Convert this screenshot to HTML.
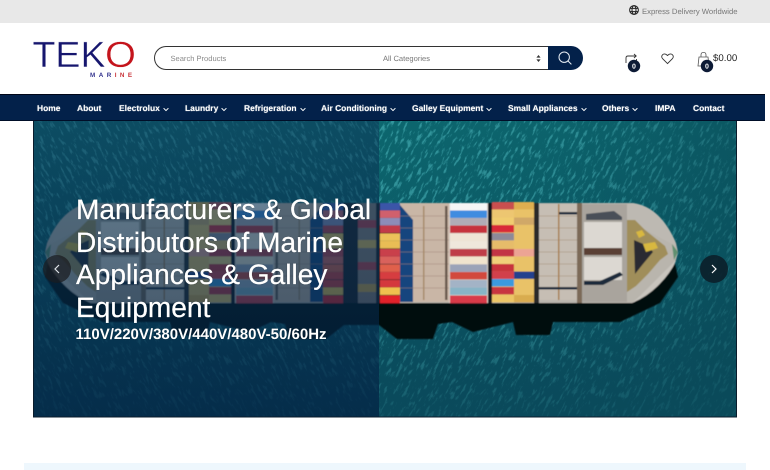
<!DOCTYPE html>
<html lang="en"><head><meta charset="utf-8"><title>Teko Marine</title>
<style>
html,body{margin:0;padding:0;background:#fff;width:770px;height:470px;overflow:hidden}
body{position:relative;font-family:"Liberation Sans",Arial,sans-serif;text-rendering:geometricPrecision}
.a{position:absolute;white-space:nowrap}
.nav{position:absolute;left:0;top:94px;width:765px;height:27px;background:#03214a;box-shadow:inset 0 1px 0 #000618,inset 0 -1px 0 #000e28}
.nav span{position:absolute;top:9px;font-size:8.45px;line-height:10px;font-weight:700;color:#fff;white-space:nowrap;text-shadow:0 0 1px rgba(255,255,255,.6)}
.nav svg{display:inline-block;margin-left:3px;vertical-align:-1px}
.t{font-size:28.1px;line-height:32.7px;color:#fff;left:76px;text-shadow:0 0 1px rgba(0,0,0,.5);-webkit-text-stroke:.25px #fff}
</style></head><body>
<div class="a" style="left:0;top:0;width:770px;height:23px;background:#e8e8e8"></div>
<svg class="a" style="left:629px;top:5px" width="10" height="10" viewBox="0 0 10 10" fill="none" stroke="#222" stroke-width="1"><circle cx="5" cy="5" r="4.4"/><ellipse cx="5" cy="5" rx="2" ry="4.4"/><path d="M.8 3.4h8.4M.8 6.600h8.400"/></svg>
<div class="a" style="left:642px;top:6px;font-size:7.7px;line-height:11px;color:#777">Express Delivery Worldwide</div>

<svg class="a" style="left:30px;top:36px" width="110" height="44" viewBox="0 0 110 44"><text x="2.5" y="31" font-family="Liberation Sans" font-size="36.5" fill="#16166e" stroke="#fff" stroke-width=".4" textLength="73" lengthAdjust="spacingAndGlyphs">TEK</text><text x="75" y="31" font-family="Liberation Sans" font-size="36.5" fill="#c4141c" stroke="#fff" stroke-width=".4" textLength="31" lengthAdjust="spacingAndGlyphs">O</text><text x="60" y="41" font-family="Liberation Sans" font-weight="700" font-size="6.3" letter-spacing="3.45" fill="#3a3a92">MAR<tspan fill="#c9343a">INE</tspan></text></svg>

<div class="a" style="left:154px;top:46px;width:394px;height:24px;box-sizing:border-box;border:1px solid #333;border-right:0;border-radius:12px 0 0 12px;background:#fff"></div>
<div class="a" style="left:548px;top:46px;width:35px;height:24px;background:#03214a;border-radius:0 12px 12px 0"></div>
<svg class="a" style="left:558px;top:51px" width="14" height="14" viewBox="0 0 14 14" fill="none" stroke="#e8eef4" stroke-width="1"><circle cx="6.2" cy="6.2" r="5.2"/><path d="M10 10l3.4 3.4"/></svg>
<div class="a" style="left:170.5px;top:53.5px;font-size:7.55px;line-height:10px;color:#8a8a8a">Search Products</div>
<div class="a" style="left:383px;top:53.5px;font-size:7.55px;line-height:10px;color:#777">All Categories</div>
<svg class="a" style="left:536px;top:55px" width="5" height="7" viewBox="0 0 5 7" fill="#333"><path d="M2.5 0L4.6 2.6H.4zM2.5 7L.4 4.4h4.2z"/></svg>

<svg class="a" style="left:620px;top:46px" width="124" height="30" viewBox="620 46 124 30" fill="none" stroke="#333" stroke-width=".9">
<path d="M626 63v-5q0-2 2-2h8M634 54l2.2 2-2.2 2M636.5 59v4"/>
<circle cx="634" cy="66" r="6.2" fill="#0c1a35" stroke="none"/>
<path d="M667.5 63.6l-5-5q-1.600-2 0-3.800q2.200-2 5 .7q2.800-2.700 5-.7q1.600 1.800 0 3.800z"/>
<path d="M699 57h9l1 9h-11zM701 57v-2q0-2.600 2.500-2.600t2.500 2.600v2" stroke="#555" stroke-width=".8"/>
<circle cx="707" cy="66" r="6.200" fill="#0c1a35" stroke="none"/>
<g font-family="Liberation Sans" font-weight="700" font-size="7" fill="#fff" stroke="none" text-anchor="middle"><text x="634" y="68.500">0</text><text x="707" y="68.500">0</text></g>
</svg>
<div class="a" style="left:713px;top:52.5px;font-size:9.7px;line-height:12px;color:#222">$0.00</div>

<div class="nav">
<span style="left:37px">Home</span>
<span style="left:77px">About</span>
<span style="left:119px">Electrolux<svg width="6" height="5" viewBox="0 0 6 5" fill="none" stroke="#fff"><path d="M.6 1.200L3 3.600l2.400-2.400"/></svg></span>
<span style="left:185px">Laundry<svg width="6" height="5" viewBox="0 0 6 5" fill="none" stroke="#fff"><path d="M.6 1.200L3 3.600l2.400-2.400"/></svg></span>
<span style="left:244px">Refrigeration<svg width="6" height="5" viewBox="0 0 6 5" fill="none" stroke="#fff"><path d="M.6 1.200L3 3.600l2.400-2.400"/></svg></span>
<span style="left:321px">Air Conditioning<svg width="6" height="5" viewBox="0 0 6 5" fill="none" stroke="#fff"><path d="M.6 1.200L3 3.600l2.400-2.400"/></svg></span>
<span style="left:412px">Galley Equipment<svg width="6" height="5" viewBox="0 0 6 5" fill="none" stroke="#fff"><path d="M.6 1.200L3 3.600l2.400-2.400"/></svg></span>
<span style="left:508px">Small Appliances<svg width="6" height="5" viewBox="0 0 6 5" fill="none" stroke="#fff"><path d="M.6 1.200L3 3.600l2.400-2.400"/></svg></span>
<span style="left:602px">Others<svg width="6" height="5" viewBox="0 0 6 5" fill="none" stroke="#fff"><path d="M.6 1.200L3 3.600l2.400-2.400"/></svg></span>
<span style="left:655px">IMPA</span>
<span style="left:693px">Contact</span>
</div>

<svg class="a" style="left:33px;top:121px" width="704" height="297" viewBox="33 121 704 297">
<defs>
<clipPath id="cl"><rect x="34" y="121" width="345" height="296"/></clipPath>
<clipPath id="cr"><rect x="379" y="121" width="357" height="296"/></clipPath>
<linearGradient id="wg" x1="0" y1="0" x2="0" y2="1"><stop offset="0" stop-color="#0c666e"/><stop offset=".45" stop-color="#0b5c67"/><stop offset="1" stop-color="#0a4759"/></linearGradient>
<linearGradient id="hz" x1="0" y1="0" x2="1" y2="0"><stop offset="0" stop-color="#0a4a58" stop-opacity="0"/><stop offset=".5" stop-color="#0a4a58" stop-opacity=".1"/><stop offset="1" stop-color="#0a4a58" stop-opacity=".55"/></linearGradient>
<linearGradient id="lg" x1="0" y1="0" x2="0" y2="1"><stop offset="0" stop-color="#0c3a5a" stop-opacity=".58"/><stop offset="1" stop-color="#021f42" stop-opacity=".68"/></linearGradient>
<linearGradient id="fade" x1="0" y1="0" x2="0" y2="1"><stop offset="0" stop-color="#0a4c5e" stop-opacity="0"/><stop offset=".5" stop-color="#0a4c5e" stop-opacity=".1"/><stop offset="1" stop-color="#0a4a5c" stop-opacity=".75"/></linearGradient>
<filter id="n" x="0" y="0" width="100%" height="100%" color-interpolation-filters="sRGB"><feTurbulence type="fractalNoise" baseFrequency=".1 .32" numOctaves="4" seed="11" stitchTiles="stitch"/><feColorMatrix values="0 0 0 0 .3 0 0 0 0 .72 0 0 0 0 .74 6 0 0 0 -3.300"/></filter>
<filter id="b" x="-5%" y="-5%" width="110%" height="110%"><feGaussianBlur stdDeviation=".4"/></filter>
<pattern id="wp" patternUnits="userSpaceOnUse" width="400" height="400" patternTransform="rotate(-62)"><rect width="400" height="400" filter="url(#n)"/></pattern>
<g id="ship">
<path d="M330 303V325L379 325 397 339H433L438 324 452 322 473 332 513 322 516 335H550L553 322 620 322 660 303 678 277 672 250 560 260H330z" fill="#050a10"/>
<path d="M343 203H632q28 3 44 40l2 9-2 8q-16 32-44 43H343z" fill="#b9b5ad"/>
<path d="M343 203h57v100h-57z" fill="#1c1c22"/>
<g id="c1"><rect x="380" y="203" width="20" height="7.400" fill="#3a55a8"/><rect x="380" y="210.500" width="20" height="7.400" fill="#d0616d"/><rect x="380" y="218" width="20" height="7.400" fill="#8c8cb8"/><rect x="380" y="225.500" width="20" height="7.400" fill="#c23a48"/><rect x="380" y="233.500" width="20" height="7.400" fill="#ecc25a"/><rect x="380" y="241" width="20" height="7.400" fill="#e9bd55"/><rect x="380" y="249" width="20" height="7.400" fill="#c9404c"/><rect x="380" y="256.500" width="20" height="7.400" fill="#d9625c"/><rect x="380" y="264.500" width="20" height="7.400" fill="#e0604c"/><rect x="380" y="272" width="20" height="7.400" fill="#d63e40"/><rect x="380" y="280" width="20" height="7.400" fill="#d4383e"/><rect x="380" y="287.500" width="20" height="7.400" fill="#efc250"/><rect x="380" y="295.500" width="20" height="7.800" fill="#e2202a"/></g>
<rect x="347" y="203" width="18" height="100" fill="#8f7f78"/><rect x="347" y="220" width="18" height="8" fill="#c03a48"/><rect x="347" y="240" width="18" height="8" fill="#e6bc58"/><rect x="347" y="262" width="18" height="8" fill="#c8404c"/><rect x="347" y="284" width="18" height="8" fill="#d6a848"/>
<rect x="400" y="203" width="49" height="99" fill="#c9b6a6"/>
<path d="M400 205l13 15v82h-13z" fill="#18457e"/>
<path d="M400 216h49M400 228h49M400 240h49M400 252h49M400 264h49M400 276h49M400 288h49" stroke="#9c8676" stroke-width=".6"/>
<rect x="445" y="206" width="2.500" height="94" fill="#6a5a50"/><rect x="423" y="206" width="1.500" height="94" fill="#a78a6a"/>
<rect x="449" y="203" width="39" height="100" fill="#d8d0c8"/>
<rect x="450" y="203" width="37" height="7.400" fill="#f6f6f6"/><rect x="450" y="210.500" width="37" height="7.400" fill="#3f8ce0"/><rect x="450" y="218" width="37" height="7.400" fill="#b0acb6"/><rect x="450" y="225.500" width="37" height="7.400" fill="#c6303c"/><rect x="450" y="233.500" width="37" height="7.400" fill="#efe4d6"/><rect x="450" y="241" width="37" height="7.400" fill="#efe7dc"/><rect x="450" y="249" width="37" height="7.400" fill="#bf3c4a"/><rect x="450" y="256.500" width="37" height="7.400" fill="#f0e4ce"/><rect x="450" y="264.500" width="37" height="7.400" fill="#9ba3b8"/><rect x="450" y="272" width="37" height="7.400" fill="#d24a3c"/><rect x="450" y="280" width="37" height="7.400" fill="#a3b3c6"/><rect x="450" y="287.500" width="37" height="7.400" fill="#88b4c6"/><rect x="450" y="295.500" width="37" height="7.800" fill="#d83a48"/>
<rect x="488" y="203" width="4" height="100" fill="#17171c"/>
<rect x="492" y="202" width="22" height="100" fill="#e8c070"/>
<rect x="492" y="202" width="22" height="7.400" fill="#c95050"/><rect x="492" y="210" width="22" height="7.400" fill="#edc671"/><rect x="492" y="217.500" width="22" height="7.400" fill="#f0cc70"/><rect x="492" y="225" width="22" height="7.400" fill="#d92c38"/><rect x="492" y="233" width="22" height="7.400" fill="#8e8a98"/><rect x="492" y="241" width="22" height="7.400" fill="#e6bc6a"/><rect x="492" y="249" width="22" height="7.400" fill="#c23644"/><rect x="492" y="256.500" width="22" height="7.400" fill="#f0cf7a"/><rect x="492" y="264" width="22" height="7.400" fill="#c8303c"/><rect x="492" y="271.500" width="22" height="7.400" fill="#d2404c"/><rect x="492" y="279" width="22" height="7.400" fill="#3a9ade"/><rect x="492" y="287" width="22" height="7.400" fill="#c83440"/><rect x="492" y="295" width="22" height="7.400" fill="#ecc666"/>
<rect x="514" y="202" width="20" height="100" fill="#e9c268"/>
<rect x="514" y="217.500" width="20" height="7.400" fill="#d0a868"/><rect x="514" y="249" width="20" height="7.400" fill="#eca494"/><rect x="514" y="271.500" width="20" height="7.400" fill="#24408e"/><rect x="514" y="202" width="20" height="7.400" fill="#dfae50"/><rect x="514" y="295" width="20" height="7.400" fill="#d9ac50"/>
<rect x="534" y="203" width="5" height="100" fill="#2a2a2c"/>
<rect x="539" y="204" width="38" height="96" fill="#c6beb4"/>
<path d="M539 216h38M539 228h38M539 240h38M539 252h38M539 264h38M539 276h38M539 288h38" stroke="#a08a78" stroke-width=".6"/>
<rect x="558" y="204" width="1.500" height="96" fill="#a88050"/>
<rect x="559" y="212" width="18" height="2.500" fill="#1c2a3a"/><rect x="539" y="287" width="38" height="2.500" fill="#1c2a3a"/>
<rect x="577" y="203" width="5" height="100" fill="#7c6a58"/>
<rect x="582" y="204" width="45" height="98" fill="#a9a49d"/>
<rect x="584" y="222" width="38" height="26" fill="#dcd8d2"/><rect x="584" y="248" width="38" height="7" fill="#5a4034"/><rect x="584" y="257" width="38" height="23" fill="#dcd8d2"/>
<path d="M586 214l28-3 8 6v3h-36z" fill="#4a5058"/>
<path d="M584 281h16l20-9 3 3-20 10h-19z" fill="#1a2a3a"/>
<path d="M627 205l5-2q26 3 42 36l2 7-30-16-19-10z" fill="#bdb9b2"/>
<path d="M627 220h8l10 10 20 16 3 8-8 6-12 14-12 12-9 6z" fill="#a08e5a"/>
<path d="M634 240l14 6 5 6-10 12-8 10z" fill="#2a2c32"/>
<path d="M643 244l12-2 3 6-12 4zM636 232l6-2 3 5-6 3z" fill="#d8b840"/>
<path d="M640 296l25-25 10-10 1 0q-12 26-44 42z" fill="#c8c4bd"/>
<path d="M672 244l6 8-4 8z" fill="#5f9070"/>
</g>
</defs>

<g clip-path="url(#cr)">
<rect x="379" y="121" width="357" height="296" fill="url(#wg)"/>
<rect x="379" y="121" width="357" height="296" fill="url(#wp)" opacity=".6"/>
<rect x="379" y="121" width="357" height="296" fill="url(#fade)"/>
<rect x="379" y="121" width="357" height="296" fill="url(#hz)"/>
<use href="#ship" filter="url(#b)"/>
</g>
<g clip-path="url(#cl)">
<g transform="translate(723 0) scale(-1 1)">
<rect x="-20" y="121" width="720" height="296" fill="url(#wg)"/>
<rect x="-20" y="121" width="720" height="296" fill="url(#wp)" opacity=".65"/>
<rect x="-20" y="121" width="720" height="296" fill="url(#fade)"/>
<use href="#ship" filter="url(#b)"/>
</g>
<rect x="34" y="121" width="345" height="296" fill="url(#lg)"/>
</g>
<rect x="33.500" y="120.500" width="703" height="296.500" fill="none" stroke="#0b1c2c" stroke-width="1"/>
</svg>

<div class="a t" style="top:193.500px">Manufacturers &amp; Global</div>
<div class="a t" style="top:226.500px">Distributors of Marine</div>
<div class="a t" style="top:258.500px">Appliances &amp; Galley</div>
<div class="a t" style="top:291.500px">Equipment</div>
<div class="a" style="left:75.500px;top:326px;font-size:15px;line-height:18px;font-weight:700;color:#fff;text-shadow:0 0 1px rgba(0,0,0,.5)">110V/220V/380V/440V/480V-50/60Hz</div>

<svg class="a" style="left:43px;top:255px" width="28" height="28" viewBox="0 0 28 28"><circle cx="14" cy="14" r="14" fill="#1a1c20" fill-opacity=".72"/><path d="M16 10l-4 4 4 4" fill="none" stroke="#dfe4e8" stroke-width="1.200"/></svg>
<svg class="a" style="left:700px;top:255px" width="28" height="28" viewBox="0 0 28 28"><circle cx="14" cy="14" r="14" fill="#0b1f2a" fill-opacity=".9"/><path d="M12 10l4 4-4 4" fill="none" stroke="#fff" stroke-width="1.200"/></svg>

<div class="a" style="left:24px;top:463px;width:722px;height:7px;background:#eef7fd"></div>
</body></html>
